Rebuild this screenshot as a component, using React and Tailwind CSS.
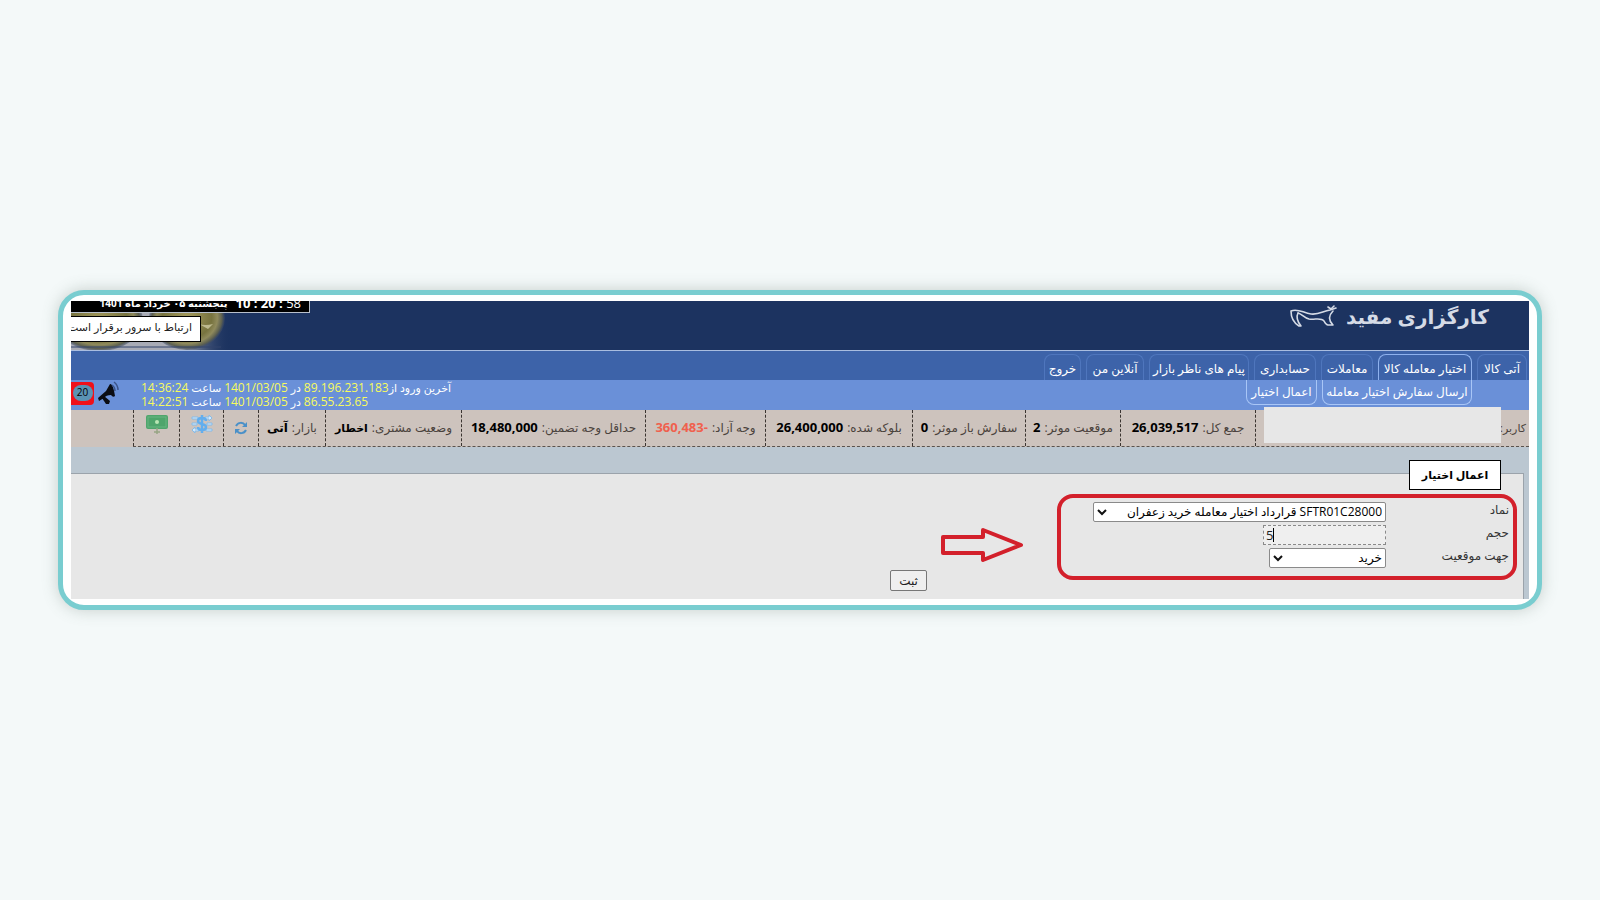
const TABS = [
  { label: 'آتی کالا', width: 'w-[50px]' },
  { label: 'اختیار معامله کالا', width: 'w-[94px]', active: true },
  { label: 'معاملات', width: 'w-[52px]' },
  { label: 'حسابداری', width: 'w-[62px]' },
  { label: 'پیام های ناظر بازار', width: 'w-[100px]' },
  { label: 'آنلاین من', width: 'w-[58px]' },
  { label: 'خروج', width: 'w-[37px]' },
];

const SUB_TABS = [
  { label: 'ارسال سفارش اختیار معامله', width: 'w-[150px]' },
  { label: 'اعمال اختیار', width: 'w-[71px]' },
];

const STATUS = [
  { label: 'جمع کل:', value: '26,039,517', width: 'w-[135px]', style: 'text-[13px] text-black' },
  { label: 'موقعیت موثر:', value: '2', width: 'w-[95px]', style: 'text-[13px] text-black' },
  { label: 'سفارش باز موثر:', value: '0', width: 'w-[113px]', style: 'text-[13px] text-black' },
  { label: 'بلوکه شده:', value: '26,400,000', width: 'w-[147px]', style: 'text-[13px] text-black' },
  { label: 'وجه آزاد:', value: '360,483-', width: 'w-[120px]', style: 'text-[13px] text-[#f0604d]' },
  { label: 'حداقل وجه تضمین:', value: '18,480,000', width: 'w-[184px]', style: 'text-[13px] text-black' },
  { label: 'وضعیت مشتری:', value: 'اخطار', width: 'w-[136px]', style: 'text-[11px] text-black' },
  { label: 'بازار:', value: 'آتی', width: 'w-[67px]', style: 'text-xs text-black' },
];

const CELL = 'flex shrink-0 items-center justify-center border-l border-dashed border-[#3a3430]';

function Logo() {
  return (
    <svg width="48" height="22" viewBox="0 0 48 22" fill="none" stroke="#d5dbe6" strokeWidth="1.6" strokeLinecap="round" strokeLinejoin="round">
      <path d="M46 3L40 5C33 6 29 10 21 9C13 8 8 3 1 6C1 12 4 18 9 21H11C7 16 6 12 8 8" />
      <path d="M8 8C12 9 14 13 19 14C25 15 31 12 34 16C35 18 36 20 38 20H43C38 15 39 10 43 6" />
      <path d="M38 2L41 4L44 1" />
    </svg>
  );
}

function Coins() {
  return (
    <svg className="absolute bottom-0 left-0" width="160" height="44" viewBox="0 0 160 44">
      <defs>
        <radialGradient id="gold" cx="0.5" cy="0.5" r="0.5">
          <stop offset="0" stopColor="#a79d5e" />
          <stop offset="0.65" stopColor="#77733f" />
          <stop offset="0.8" stopColor="#8f8a5c" />
          <stop offset="0.92" stopColor="#5d6050" />
          <stop offset="1" stopColor="#3c4a66" stopOpacity="0.4" />
        </radialGradient>
        <linearGradient id="fade" x1="0" x2="1">
          <stop offset="0.7" stopColor="#a9abb5" />
          <stop offset="1" stopColor="#1c3360" stopOpacity="0" />
        </linearGradient>
      </defs>
      <rect width="160" height="44" fill="url(#fade)" />
      <ellipse cx="28" cy="14" rx="44" ry="31" fill="url(#gold)" />
      <ellipse cx="116" cy="12" rx="38" ry="32" fill="url(#gold)" />
      <path d="M128 18Q134 20 142 18L137 23Z" fill="#bdb98e" />
      <path d="M0 41H150" stroke="#33446c" />
    </svg>
  );
}

function Megaphone() {
  return (
    <svg width="22" height="24" viewBox="0 0 22 24">
      <path d="M12 3Q15 2 17 15Q15 17 13 14Q8 14 6 17L1 20L0 17L8 10Z" fill="#0b0d14" />
      <path d="M6 15L12 20L11 23H8L4 17Z" fill="#0b0d14" />
      <path d="M14 4Q17 6 17 10M16 1Q20 4 20 9" fill="none" stroke="#3c5488" strokeWidth="1.5" />
    </svg>
  );
}

function RefreshIcon() {
  return (
    <svg width="14" height="14" viewBox="0 0 14 14" fill="none" stroke="#4a90c8" strokeWidth="2">
      <path d="M2 5C4 1 9 1 11 4M12 9C10 13 5 13 3 10" />
      <path d="M13 1V6H8ZM1 13V8H6Z" fill="#4a90c8" stroke="none" />
    </svg>
  );
}

function TransferIcon() {
  return (
    <svg width="22" height="20" viewBox="0 0 22 20" fill="none">
      <g fill="#d3e9fb" stroke="#86bbe8">
        <path d="M1 3H7V5H1ZM14 3H18V1L21 4L18 7V5H14Z" />
        <path d="M1 9H6V11H1ZM16 9H21V11H16Z" />
        <path d="M8 15H4V13L1 16L4 19V17H8ZM15 15H21V17H15Z" />
      </g>
      <path d="M15 7C15 3 7 3 7 7C7 11 15 9 15 13C15 17 7 17 7 13M11 1V19" stroke="#62aeee" strokeWidth="2.5" />
    </svg>
  );
}

function MoneyIcon() {
  return (
    <svg width="22" height="20" viewBox="0 0 22 20">
      <rect x="0" y="1" width="22" height="14" rx="2" fill="#4fa56c" />
      <rect x="2" y="3" width="18" height="10" fill="none" stroke="#68b681" />
      <circle cx="11" cy="8" r="2" fill="#b9e6b4" />
      <path d="M11 14V20M8 18H14" fill="none" stroke="#97a584" strokeWidth="1.5" />
    </svg>
  );
}

function Select({ id, value, width }) {
  return (
    <div className={`relative ${width}`}>
      <select id={id} className="block h-5 w-full appearance-none rounded-xs border border-[#8a8a8a] bg-white pr-[3px] pl-4 text-xs leading-4 text-black">
        <option>{value}</option>
      </select>
      <svg className="pointer-events-none absolute top-[6px] left-1" width="10" height="8" viewBox="0 0 10 8" fill="none" stroke="#111" strokeWidth="2">
        <path d="M1 2L5 6L9 2" />
      </svg>
    </div>
  );
}

export default function App() {
  return (
    <div className="flex min-h-screen items-center bg-[#f4f9f9] px-[58px] font-['Open_Sans','DejaVu_Sans',sans-serif]">
      <div className="w-full rounded-[26px] border-5 border-[#79cdd0] bg-white px-2 py-[6px] shadow-[0_0_16px_rgba(90,110,100,0.3)]">
        <div dir="rtl" className="overflow-hidden text-xs">
          <header className="flex h-[50px] justify-between border-b border-[#a9bde0] bg-[#1c3360]">
            <div className="flex items-start gap-2 pt-1 pr-10">
              <h1 className="text-xl leading-6 font-bold whitespace-nowrap text-[#d5dbe6]">کارگزاری مفید</h1>
              <Logo />
            </div>
            <div className="relative flex w-[239px] flex-col items-end">
              <Coins />
              {/* clock strip, scrolled partly under the top edge */}
              <div className="relative flex h-[12px] w-full items-end gap-2 overflow-hidden border-r border-b border-[#b8c0cc] bg-black pr-2 pb-px font-bold whitespace-nowrap text-white">
                <span dir="ltr" className="text-[13px] leading-4">
                  10 : 20 : <span className="font-normal">58</span>
                </span>
                <span className="text-[10px] leading-4">پنجشنبه ۰۵ خرداد ماه 1401</span>
              </div>
              <div className="relative mt-[3px] h-[26px] w-[130px] border border-l-0 border-black bg-white pr-2 text-[11px] leading-5 whitespace-nowrap text-[#222]">
                ارتباط با سرور برقرار است
              </div>
            </div>
          </header>

          <nav className="flex h-[29px] items-end gap-[5px] bg-[#3d63a9] pr-[2px]">
            {TABS.map((t) => (
              <a
                key={t.label}
                href="#"
                className={`flex h-[26px] shrink-0 items-center justify-center rounded-t-lg border border-b-0 pt-[2px] text-xs whitespace-nowrap text-white ${t.width} ${
                  t.active ? 'border-[#8fb2ee]' : 'border-[#4f76bd]'
                }`}
              >
                {t.label}
              </a>
            ))}
          </nav>

          <div className="flex h-[30px] items-start justify-between bg-[#6a90d8]">
            <div className="flex gap-[5px] pr-[57px]">
              {SUB_TABS.map((t) => (
                <a
                  key={t.label}
                  href="#"
                  className={`flex h-[25px] items-center justify-center rounded-b-lg border border-t-0 border-[#a9c6f6] text-xs whitespace-nowrap text-white ${t.width}`}
                >
                  {t.label}
                </a>
              ))}
            </div>
            <div className="flex items-start">
              <div className="flex flex-col items-end pt-px text-[11px] leading-[14px] whitespace-nowrap text-white">
                <p>
                  آخرین ورود از<span className="text-xs leading-[14px] text-[#f8fb5c]">89.196.231.183</span> در{' '}
                  <span className="text-xs leading-[14px] text-[#f8fb5c]">1401/03/05</span> ساعت{' '}
                  <span className="text-xs leading-[14px] text-[#f8fb5c]">14:36:24</span>
                </p>
                <p>
                  <span className="text-xs leading-[14px] text-[#f8fb5c]">86.55.23.65</span> در{' '}
                  <span className="text-xs leading-[14px] text-[#f8fb5c]">1401/03/05</span> ساعت{' '}
                  <span className="text-xs leading-[14px] text-[#f8fb5c]">14:22:51</span>
                </p>
              </div>
              <div className="flex w-[70px] items-center justify-end gap-1 pt-[1px]">
                <Megaphone />
                <span className="flex h-[23px] w-[23px] items-center justify-center rounded-r-sm bg-[#f0101a]">
                  <span className="flex h-4 w-5 items-center justify-center rounded-full bg-[#5b93b4] text-[10px] text-black">20</span>
                </span>
              </div>
            </div>
          </div>

          <div className="flex h-[37px] bg-[#cdc3bd]">
            <div className="flex min-w-0 grow border-b border-dashed border-[#5a534e] text-[#4a423c]">
              <div className="relative flex grow items-center border-l border-dashed border-[#3a3430] pr-[3px] text-[11px]">
                کاربر:
                <span className="absolute top-[-3px] right-7 h-9 w-[237px] bg-[#e7e7e7]" />
              </div>
              {STATUS.map((s) => (
                <div key={s.label} className={`${CELL} gap-1 whitespace-nowrap ${s.width}`}>
                  {s.label}
                  <b dir="ltr" className={s.style}>{s.value}</b>
                </div>
              ))}
              <button aria-label="refresh" className={`${CELL} w-[35px]`}><RefreshIcon /></button>
              <button aria-label="transfer" className={`${CELL} w-11 pb-2`}><TransferIcon /></button>
              <button aria-label="money" className={`${CELL} w-[46px] pb-2`}><MoneyIcon /></button>
            </div>
            <div className="w-[62px] shrink-0" />
          </div>

          <main className="bg-[#bbc7d1] pt-[26px] pr-[5px]">
            <form className="relative h-[126px] border-t border-r border-[#9ba3ab] bg-[#e7e7e7]" onSubmit={(e) => e.preventDefault()}>
              <h2 className="absolute top-[-14px] right-[22px] flex h-[30px] w-[92px] items-center justify-center border border-black bg-white text-[11px] font-bold text-black">
                اعمال اختیار
              </h2>
              <div className="flex items-center gap-8 pt-5 pr-[6px]">
                <div className="grid h-[86px] w-[460px] grid-cols-[123px_1fr] content-start gap-y-[3px] rounded-2xl border-4 border-[#d3202b] pt-1 pr-1 text-[#333]">
                  <label htmlFor="symbol" className="leading-4">نماد</label>
                  <Select id="symbol" value="SFTR01C28000 قرارداد اختیار معامله خرید زعفران" width="w-[293px]" />
                  <label htmlFor="volume" className="leading-4">حجم</label>
                  <div className="relative w-[123px]">
                    <input id="volume" dir="ltr" defaultValue="5" className="block h-5 w-full border border-dashed border-[#8a8a8a] bg-[#efefef] px-[2px] text-[13px] text-[#222]" />
                    <span className="absolute top-[3px] left-[10px] h-[14px] w-px bg-black" />
                  </div>
                  <label htmlFor="side" className="leading-4">جهت موقعیت</label>
                  <Select id="side" value="خرید" width="w-[117px]" />
                </div>
                <svg className="mt-4" width="84" height="36" viewBox="0 0 84 36" fill="none" stroke="#d3202b" strokeWidth="4" strokeLinejoin="round">
                  <path d="M2 10H42V3L80 18L42 33V26H2Z" />
                </svg>
              </div>
              <button className="absolute top-[96px] right-[596px] h-[21px] w-[37px] rounded-xs border border-[#777] bg-[#efefef] text-xs text-[#222]">
                ثبت
              </button>
            </form>
          </main>
        </div>
      </div>
    </div>
  );
}
